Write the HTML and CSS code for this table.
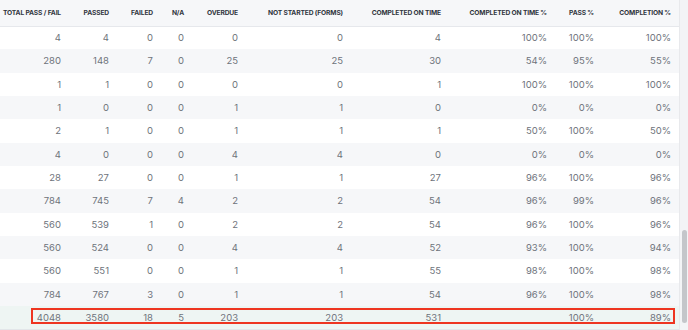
FILE: index.html
```html
<!DOCTYPE html>
<html lang="en">
  <head>
    <meta charset="UTF-8" />
    <meta name="viewport" content="width=device-width, initial-scale=1.0" />
    <title>Form Summary</title>
    <link rel="stylesheet" href="styles.css">
  </head>
  <body>
    <div class="frame">
      <div class="table-wrap">
        <table class="summary">
          <colgroup>
            <col style="width: 69px" />
            <col style="width: 48px" />
            <col style="width: 44px" />
            <col style="width: 31px" />
            <col style="width: 54px" />
            <col style="width: 105px" />
            <col style="width: 98px" />
            <col style="width: 106px" />
            <col style="width: 47px" />
            <col style="width: 77px" />
          </colgroup>
          <thead>
            <tr>
              <th>Total Pass / Fail</th>
              <th>Passed</th>
              <th>Failed</th>
              <th>N/A</th>
              <th>Overdue</th>
              <th>Not Started (Forms)</th>
              <th>Completed On Time</th>
              <th>Completed On Time %</th>
              <th>Pass %</th>
              <th>Completion %</th>
            </tr>
          </thead>
          <tbody>
            <tr><td>4</td><td>4</td><td>0</td><td>0</td><td>0</td><td>0</td><td>4</td><td>100%</td><td>100%</td><td>100%</td></tr>
            <tr><td>280</td><td>148</td><td>7</td><td>0</td><td>25</td><td>25</td><td>30</td><td>54%</td><td>95%</td><td>55%</td></tr>
            <tr><td>1</td><td>1</td><td>0</td><td>0</td><td>0</td><td>0</td><td>1</td><td>100%</td><td>100%</td><td>100%</td></tr>
            <tr><td>1</td><td>0</td><td>0</td><td>0</td><td>1</td><td>1</td><td>0</td><td>0%</td><td>0%</td><td>0%</td></tr>
            <tr><td>2</td><td>1</td><td>0</td><td>0</td><td>1</td><td>1</td><td>1</td><td>50%</td><td>100%</td><td>50%</td></tr>
            <tr><td>4</td><td>0</td><td>0</td><td>0</td><td>4</td><td>4</td><td>0</td><td>0%</td><td>0%</td><td>0%</td></tr>
            <tr><td>28</td><td>27</td><td>0</td><td>0</td><td>1</td><td>1</td><td>27</td><td>96%</td><td>100%</td><td>96%</td></tr>
            <tr><td>784</td><td>745</td><td>7</td><td>4</td><td>2</td><td>2</td><td>54</td><td>96%</td><td>99%</td><td>96%</td></tr>
            <tr><td>560</td><td>539</td><td>1</td><td>0</td><td>2</td><td>2</td><td>54</td><td>96%</td><td>100%</td><td>96%</td></tr>
            <tr><td>560</td><td>524</td><td>0</td><td>0</td><td>4</td><td>4</td><td>52</td><td>93%</td><td>100%</td><td>94%</td></tr>
            <tr><td>560</td><td>551</td><td>0</td><td>0</td><td>1</td><td>1</td><td>55</td><td>98%</td><td>100%</td><td>98%</td></tr>
            <tr><td>784</td><td>767</td><td>3</td><td>0</td><td>1</td><td>1</td><td>54</td><td>96%</td><td>100%</td><td>98%</td></tr>
            <tr class="total"><td>4048</td><td>3580</td><td>18</td><td>5</td><td>203</td><td>203</td><td>531</td><td></td><td>100%</td><td>89%</td></tr>
          </tbody>
        </table>
        <div class="highlight"></div>
      </div>
      <div class="scrollbar">
        <div class="thumb"></div>
      </div>
    </div>
  </body>
</html>
```

FILE: styles.css
```css
body {
  margin: 0;
  background-color: #fff;
  font-family: Inter, "Noto Sans", sans-serif;
  overflow: hidden;
}
.frame {
  display: flex;
  width: 688px;
  height: 330px;
}
.table-wrap {
  position: relative;
  width: 679px;
  height: 330px;
}
.summary {
  width: 679px;
  border-collapse: collapse;
  table-layout: fixed;
}
.summary th {
  height: 26px;
  padding: 0 8px 0 0;
  background-color: #f6f7f9;
  border-bottom: 1px solid #e6e8ec;
  color: #30353d;
  font-size: 6.7px;
  font-weight: 700;
  letter-spacing: -0.15px;
  text-transform: uppercase;
  text-align: right;
  white-space: nowrap;
  box-sizing: border-box;
}
.summary td {
  height: 23.33px;
  padding: 0 8px 0 0;
  color: #6e737b;
  font-size: 9.5px;
  text-align: right;
  box-sizing: border-box;
}
.summary tbody tr:nth-child(even) {
  background-color: #f6f7f9;
}
.summary tbody tr.total {
  background-color: #eef5f3;
  border-bottom: 1px solid #e2e6e9;
}
.highlight {
  position: absolute;
  left: 31px;
  top: 308px;
  width: 644px;
  height: 16px;
  border: 2px solid #ee3521;
  box-sizing: border-box;
}
.scrollbar {
  width: 9px;
  height: 330px;
  background-color: #f3f4f6;
  border-left: 1px solid #e8e9ec;
  box-sizing: border-box;
  position: relative;
}
.thumb {
  position: absolute;
  left: 2px;
  top: 230px;
  width: 5px;
  height: 93px;
  border-radius: 3px;
  background-color: #c4c6ca;
}
```
